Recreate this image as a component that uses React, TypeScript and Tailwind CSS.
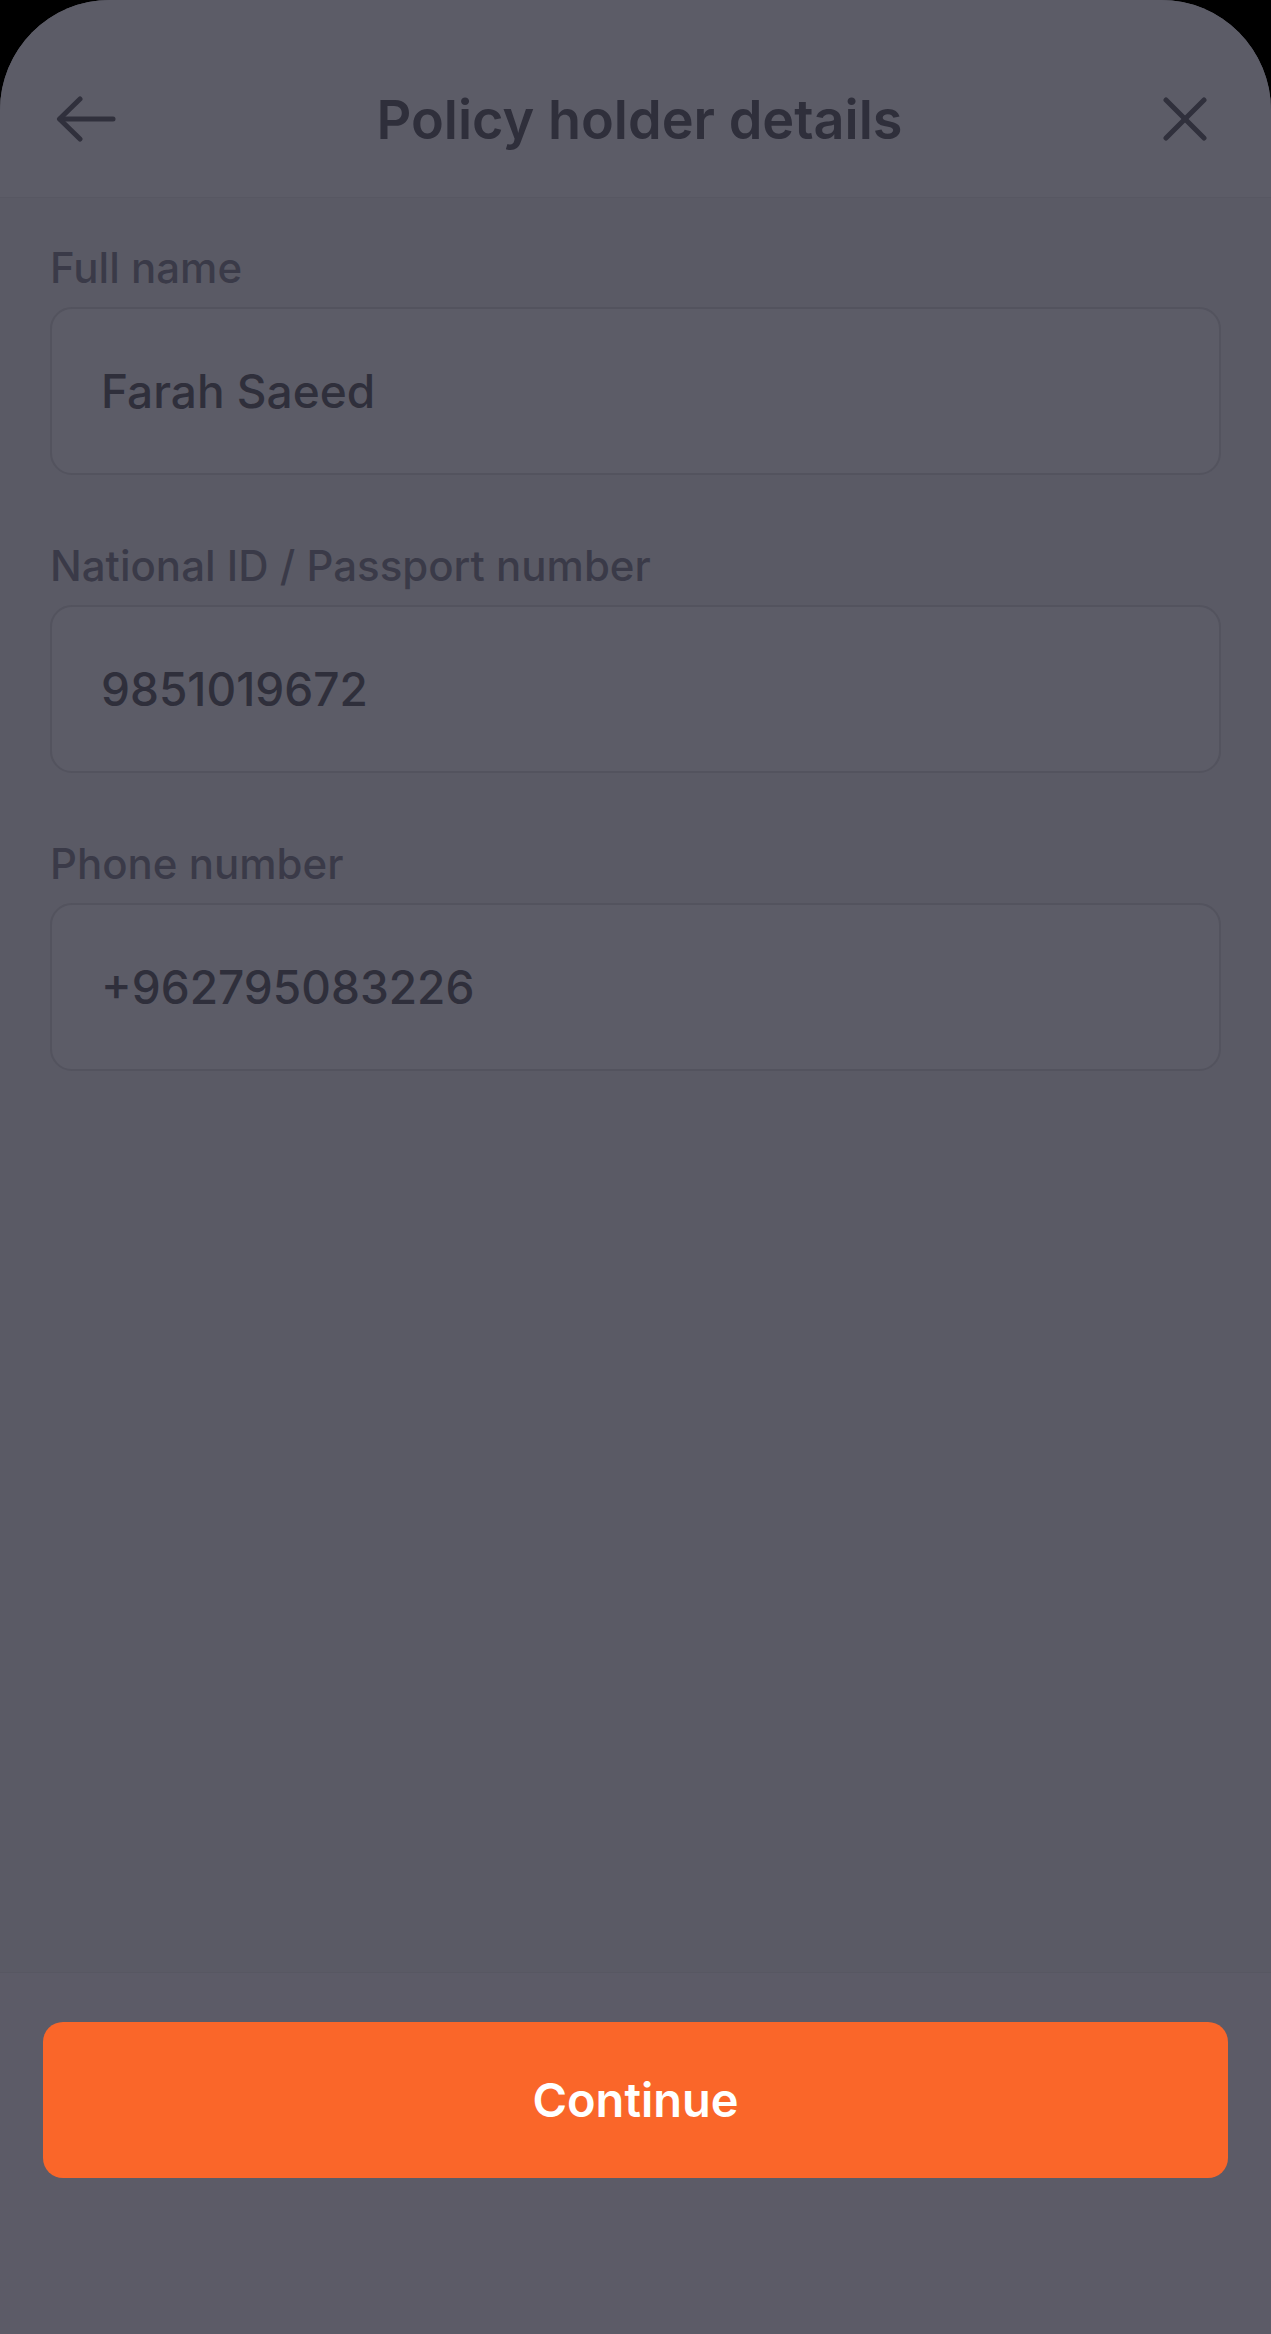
const FIELDS = [
  { label: "Full name", value: "Farah Saeed" },
  { label: "National ID / Passport number", value: "9851019672" },
  { label: "Phone number", value: "+962795083226" },
];

function Field({ label, value }: { label: string; value: string }) {
  return (
    <div className="flex flex-col gap-[16px]">
      <label className="text-[42px] leading-[46px] font-medium text-[#3a3a48]">
        {label}
      </label>
      <div className="h-[168px] rounded-[22px] border-2 border-[#53535e] bg-[#5c5c67] flex items-center px-[49px]">
        <span className="text-[46px] font-medium text-[#2f2f3b]">{value}</span>
      </div>
    </div>
  );
}

export default function App() {
  return (
    <div
      className="min-h-screen bg-black"
      style={{ fontFamily: "Inter, 'Noto Sans', sans-serif" }}
    >
      <div className="min-h-screen flex flex-col bg-[#5a5a65] rounded-t-[110px] overflow-hidden">
        {/* Header */}
        <div className="h-[198px] pt-[40px] bg-[#5c5c67] border-b border-[#575762]">
          <div className="h-[158px] flex items-center justify-between pl-[56px] pr-[64px]">
            <svg width="60" height="46" viewBox="0 0 60 46" fill="none" stroke="#30303c" strokeWidth="5" strokeLinecap="round" strokeLinejoin="round">
              <path d="M57 23H4" />
              <path d="M24 3L3.5 23L24 43" />
            </svg>
            <h1 className="text-[54px] font-semibold text-[#2f2f3b]">
              Policy holder details
            </h1>
            <svg width="44" height="44" viewBox="0 0 44 44" fill="none" stroke="#30303c" strokeWidth="5" strokeLinecap="round">
              <path d="M3 3L41 41" />
              <path d="M41 3L3 41" />
            </svg>
          </div>
        </div>

        {/* Form */}
        <div className="flex flex-col gap-[68px] px-[50px] pt-[47px]">
          {FIELDS.map((f) => (
            <Field key={f.label} label={f.label} value={f.value} />
          ))}
        </div>

        {/* Footer */}
        <div className="mt-auto h-[362px] border-t border-[#575762] bg-[#5c5b67] px-[43px] pt-[49px]">
          <button className="w-full h-[156px] rounded-[20px] bg-[#fa6629] text-white text-[47px] font-semibold">
            Continue
          </button>
        </div>
      </div>
    </div>
  );
}
